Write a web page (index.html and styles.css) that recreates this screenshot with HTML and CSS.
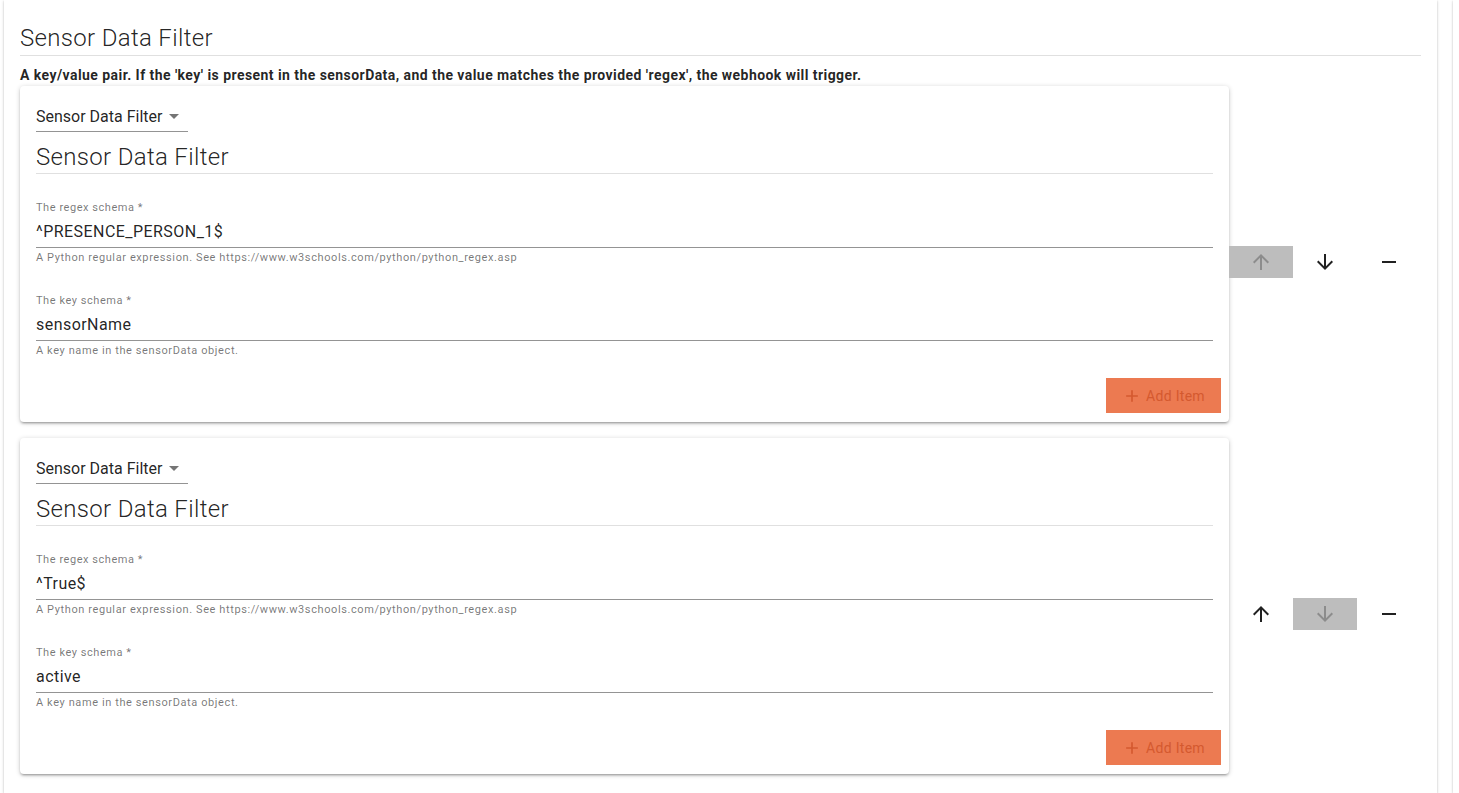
FILE: index.html
```html
<!DOCTYPE html>
<html lang="en">
<head>
<meta charset="utf-8">
<title>Sensor Data Filter</title>
<link rel="stylesheet" href="styles.css">
</head>
<body>
<div class="page">
  <div class="paper">
    <h2 class="title">Sensor Data Filter</h2>
    <p class="desc">A key/value pair. If the 'key' is present in the sensorData, and the value matches the provided 'regex', the webhook will trigger.</p>

    <div class="row">
      <div class="card">
        <div class="select"><span>Sensor Data Filter</span><svg class="caret" viewBox="0 0 24 24"><path d="M7 10l5 5 5-5z"/></svg></div>
        <h3 class="card-title">Sensor Data Filter</h3>
        <div class="field">
          <label class="label">The regex schema *</label>
          <div class="input">^PRESENCE_PERSON_1$</div>
          <div class="helper">A Python regular expression. See https://www.w3schools.com/python/python_regex.asp</div>
        </div>
        <div class="field">
          <label class="label">The key schema *</label>
          <div class="input">sensorName</div>
          <div class="helper">A key name in the sensorData object.</div>
        </div>
        <div class="actions">
          <button class="add"><svg viewBox="0 0 24 24"><path d="M19 13h-6v6h-2v-6H5v-2h6V5h2v6h6v2z"/></svg>Add Item</button>
        </div>
      </div>
      <div class="controls">
        <button class="ctl disabled"><svg viewBox="0 0 24 24"><path d="M4 12l1.41 1.41L11 7.83V20h2V7.83l5.58 5.59L20 12l-8-8-8 8z"/></svg></button>
        <button class="ctl"><svg viewBox="0 0 24 24"><path d="M20 12l-1.41-1.41L13 16.17V4h-2v12.17l-5.58-5.59L4 12l8 8 8-8z"/></svg></button>
        <button class="ctl"><svg viewBox="0 0 24 24"><path d="M19 13H5v-2h14v2z"/></svg></button>
      </div>
    </div>

    <div class="row">
      <div class="card">
        <div class="select"><span>Sensor Data Filter</span><svg class="caret" viewBox="0 0 24 24"><path d="M7 10l5 5 5-5z"/></svg></div>
        <h3 class="card-title">Sensor Data Filter</h3>
        <div class="field">
          <label class="label">The regex schema *</label>
          <div class="input">^True$</div>
          <div class="helper">A Python regular expression. See https://www.w3schools.com/python/python_regex.asp</div>
        </div>
        <div class="field">
          <label class="label">The key schema *</label>
          <div class="input">active</div>
          <div class="helper">A key name in the sensorData object.</div>
        </div>
        <div class="actions">
          <button class="add"><svg viewBox="0 0 24 24"><path d="M19 13h-6v6h-2v-6H5v-2h6V5h2v6h6v2z"/></svg>Add Item</button>
        </div>
      </div>
      <div class="controls">
        <button class="ctl"><svg viewBox="0 0 24 24"><path d="M4 12l1.41 1.41L11 7.83V20h2V7.83l5.58 5.59L20 12l-8-8-8 8z"/></svg></button>
        <button class="ctl disabled"><svg viewBox="0 0 24 24"><path d="M20 12l-1.41-1.41L13 16.17V4h-2v12.17l-5.58-5.59L4 12l8 8 8-8z"/></svg></button>
        <button class="ctl"><svg viewBox="0 0 24 24"><path d="M19 13H5v-2h14v2z"/></svg></button>
      </div>
    </div>
  </div>
  <div class="side"></div>
</div>
</body>
</html>
```
FILE: styles.css
```css
html, body {
  margin: 0;
  padding: 0;
  background: #fff;
  height: 100%;
  overflow: hidden;
}
body {
  font-family: Roboto, "Liberation Sans", sans-serif;
  color: rgba(0, 0, 0, 0.87);
}
.page {
  display: flex;
  height: 793px;
  gap: 16px;
}
.paper {
  width: 1401px;
  margin-left: 4px;
  padding: 22px 16px 0 16px;
  background: #fff;
  box-shadow: 0 1px 3px rgba(0,0,0,0.2), 0 1px 1px rgba(0,0,0,0.14), 0 2px 1px -1px rgba(0,0,0,0.12);
  flex: none;
}
.side {
  flex: 1;
  background: #fff;
  box-shadow: 0 1px 3px rgba(0,0,0,0.2), 0 1px 1px rgba(0,0,0,0.14);
}
.title {
  margin: 0;
  font-size: 24px;
  font-weight: 300;
  line-height: 32px;
  letter-spacing: 0.33px;
  padding-bottom: 1px;
  border-bottom: 1px solid #e0e0e0;
}
.desc {
  margin: 9px 0 0 0;
  font-size: 14px;
  font-weight: 700;
  line-height: 20px;
  letter-spacing: 0.44px;
}
.row {
  display: flex;
  align-items: center;
  margin-top: 1px;
}
.row + .row { margin-top: 0; }
.card {
  flex: 1;
  min-width: 0;
  margin-bottom: 16px;
  padding: 14px 16px 9px 16px;
  background: #fff;
  border-radius: 4px;
  box-shadow: 0 1px 5px rgba(0,0,0,0.2), 0 2px 2px rgba(0,0,0,0.14), 0 3px 1px -2px rgba(0,0,0,0.12);
}
.select {
  width: 152px;
  box-sizing: border-box;
  height: 32px;
  display: flex;
  align-items: center;
  font-size: 16px;
  white-space: nowrap;
  border-bottom: 1px solid rgba(0,0,0,0.42);
  padding-top: 1px;
}
.caret {
  flex: none;
  width: 24px;
  height: 24px;
  fill: rgba(0,0,0,0.54);
  margin-left: 0;
}
.card-title {
  margin: 9px 0 0 0;
  font-size: 24px;
  font-weight: 300;
  line-height: 32px;
  letter-spacing: 0.33px;
  border-bottom: 1px solid #e0e0e0;
}
.field {
  margin-top: 27px;
}
.field + .field { margin-top: 30px; }
.label {
  display: block;
  font-size: 11px;
  line-height: 13px;
  letter-spacing: 0.55px;
  color: rgba(0,0,0,0.54);
}
.input {
  margin-top: 2px;
  font-size: 16px;
  line-height: 19px;
  letter-spacing: 0.45px;
  padding: 6px 0 6px 0;
  border-bottom: 1px solid rgba(0,0,0,0.42);
}
.helper {
  margin-top: 3px;
  font-size: 11px;
  line-height: 13px;
  letter-spacing: 0.6px;
  color: rgba(0,0,0,0.54);
}
.actions {
  display: flex;
  justify-content: flex-end;
  margin-top: 21px;
  margin-right: -8px;
}
.add {
  display: flex;
  align-items: center;
  justify-content: center;
  gap: 4px;
  width: 115px;
  height: 35px;
  border: none;
  border-radius: 0;
  background: #ec7a51;
  color: #d4592f;
  font-family: inherit;
  font-size: 14px;
  letter-spacing: 0.3px;
  padding: 0;
}
.add svg {
  width: 20px;
  height: 20px;
  fill: #d4592f;
}
.controls {
  display: flex;
  flex: none;
}
.ctl {
  width: 64px;
  height: 32px;
  border: none;
  background: transparent;
  padding: 0;
  display: flex;
  align-items: center;
  justify-content: center;
}
.ctl svg {
  width: 24px;
  height: 24px;
  fill: rgba(0,0,0,0.87);
}
.ctl.disabled {
  background: #bdbdbd;
}
.ctl.disabled svg {
  fill: rgba(0,0,0,0.26);
}
```
